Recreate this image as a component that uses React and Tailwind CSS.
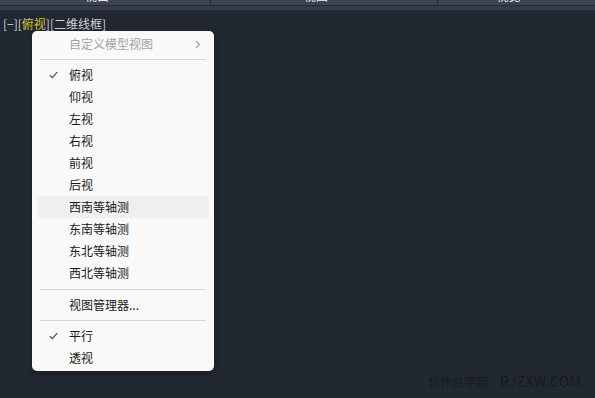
import React from 'react';

const views = ['俯视', '仰视', '左视', '右视', '前视', '后视', '西南等轴测', '东南等轴测', '东北等轴测', '西北等轴测'];

function Check() {
  return (
    <svg width="9" height="8" viewBox="0 0 9 8" className="text-[#444]">
      <path d="M0.8 4.2 L3.3 6.6 L8.2 1.2" fill="none" stroke="currentColor" strokeWidth="1.1" />
    </svg>
  );
}

function Item({ label, checked, active, disabled, arrow }) {
  return (
    <div
      className={`mx-[5px] h-[22px] flex items-center rounded-[4px] ${active ? 'bg-[#efefef]' : ''}`}
    >
      <div className="w-[32px] flex justify-center pl-[1px]">{checked && <Check />}</div>
      <span className={`flex-1 text-[12px] leading-none ${disabled ? 'text-[#a3a3a3]' : 'text-[#1a1a1a]'}`}>{label}</span>
      {arrow && (
        <svg width="6" height="9" viewBox="0 0 6 9" className="mr-[8px] text-[#a3a3a3]">
          <path d="M1 1 L4.6 4.5 L1 8" fill="none" stroke="currentColor" strokeWidth="1.1" />
        </svg>
      )}
    </div>
  );
}

function Sep({ h }) {
  return (
    <div className={`${h} flex items-center mx-[8px]`}>
      <div className="h-px w-full bg-[#d5d5d5]" />
    </div>
  );
}

export default function App() {
  return (
    <div
      className="w-[595px] h-[398px] overflow-hidden bg-[#222831] flex flex-col"
      style={{ fontFamily: '"Noto Sans CJK SC", "Noto Sans", sans-serif' }}
    >
      {/* header strip, only the bottom of its labels shows */}
      <div className="h-[5px] bg-[#3c4454] flex overflow-hidden">
        <div className="w-[211px] border-r border-[#2a2f38] flex justify-center overflow-hidden">
          <span className="text-[12px] leading-none -mt-[10px] -ml-[16px] text-[#e8e8e8]">视口</span>
        </div>
        <div className="w-[227px] border-r border-[#2a2f38] flex justify-center overflow-hidden">
          <span className="text-[12px] leading-none -mt-[10px] -ml-[16px] text-[#e8e8e8]">视图</span>
        </div>
        <div className="flex-1 flex justify-center overflow-hidden">
          <span className="text-[12px] leading-none -mt-[10px] -ml-[16px] text-[#e8e8e8]">视觉</span>
        </div>
      </div>
      <div className="h-px bg-[#262b33]" />
      <div className="h-[4px] bg-[#353c48]" />

      <div className="relative flex-1">
        <div className="pl-[3px] pt-[6px] text-[12px] leading-[15px] text-[#cfd2d6]">
          [−][<span className="text-[#d8c43c]">俯视</span>][二维线框]
        </div>

        <div className="absolute left-[32px] top-[21px] w-[182px] rounded-[5px] bg-[#f9f9f9] py-[2px] shadow-[0_2px_6px_rgba(0,0,0,0.35)]">
          <Item label="自定义模型视图" disabled arrow />
          <Sep h="h-[9px]" />
          {views.map((v, i) => (
            <Item key={v} label={v} checked={i === 0} active={v === '西南等轴测'} />
          ))}
          <Sep h="h-[10px]" />
          <Item label="视图管理器..." />
          <Sep h="h-[9px]" />
          <Item label="平行" checked />
          <Item label="透视" />
        </div>

        <div className="absolute left-[428px] top-[364px] text-[12px] leading-none text-[#171b21] whitespace-nowrap">
          软件自学网：<span className="text-[14px] tracking-[0.3px]">RJZXW.COM</span>
        </div>
      </div>
    </div>
  );
}
